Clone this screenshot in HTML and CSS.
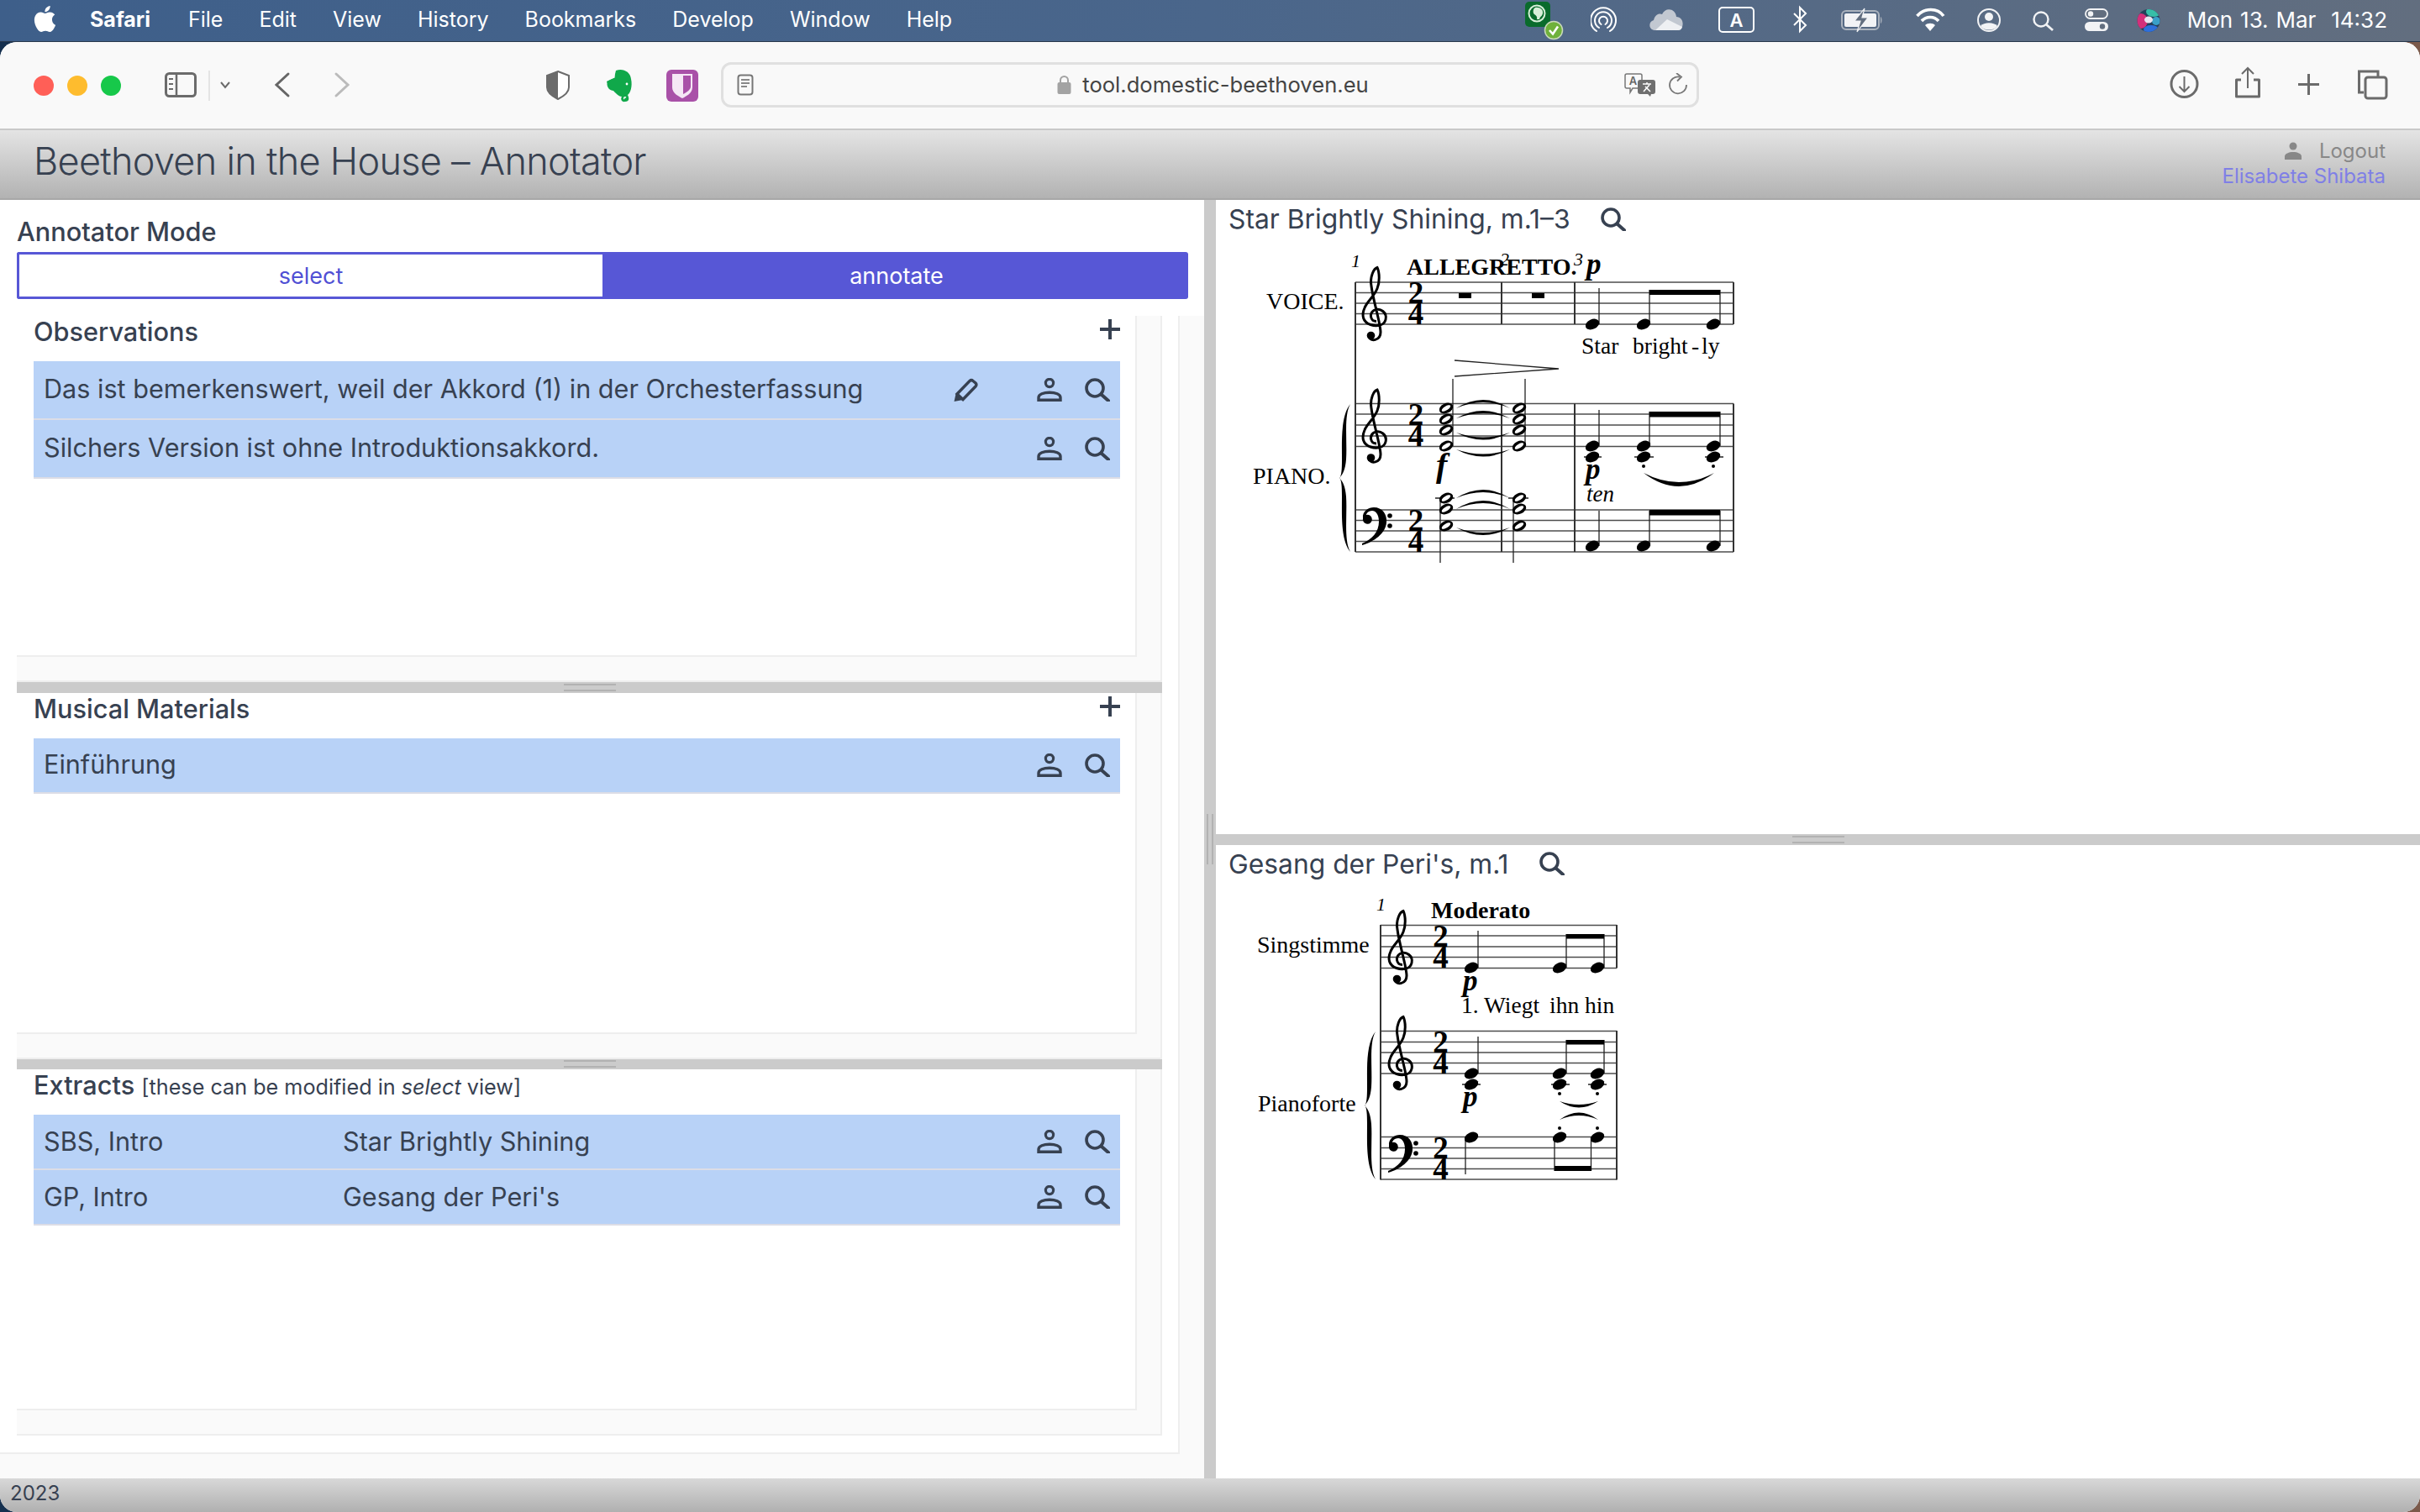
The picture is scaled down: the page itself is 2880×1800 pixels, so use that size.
FILE: index.html
```html
<!DOCTYPE html>
<html lang="en">
<head>
<meta charset="utf-8">
<title>Beethoven in the House – Annotator</title>
<link rel="stylesheet" href="styles.css">
</head>
<body>
<svg class="defs" aria-hidden="true">
  <defs>
    <symbol id="i-person" viewBox="0 0 30 28"><circle cx="15" cy="6" r="4.6" fill="none" stroke="currentColor" stroke-width="3.2"/><path d="M2 26.2v-3c0-4 6-6 13-6s13 2 13 6v3z" fill="none" stroke="currentColor" stroke-width="3.4"/></symbol>
    <symbol id="i-search" viewBox="0 0 31 28"><circle cx="13" cy="12" r="10" fill="none" stroke="currentColor" stroke-width="3.6"/><path d="M20.5 19.5L29 27" stroke="currentColor" stroke-width="4" stroke-linecap="round"/></symbol>
    <symbol id="i-pencil" viewBox="0 0 31 29"><path d="M5 19L20 3.5a3 3 0 0 1 4 0l3 2.5a3 3 0 0 1 0 4L12 25.500z" fill="none" stroke="currentColor" stroke-width="3.400"/><path d="M1.500 28l2-9 8.500 7z" fill="currentColor"/></symbol>
    <symbol id="i-plus" viewBox="0 0 24 24"><path d="M12 0v24M0 12h24" stroke="currentColor" stroke-width="4"/></symbol>

    <g id="treble"><path d="M2 9C-5 9-7 0-1-4C7-8 15-1 13 7C11 15 1 15-5 13C-14 10-16 2-12-7C-9-15-1-20 3-30C6-37 6-49 3-55C-1-54-6-44-4-33C-2-16 7 11 7 22C7 32-5 34-7 27" fill="none" stroke="#000" stroke-width="3"/><circle cx="-4.500" cy="26" r="4.800"/></g>
    <g id="bass"><path d="M-15 10C-16 1-8-3-2-3C8-3 14 5 13 15C12 28-2 38-16 42L-16 40C-4 35 4 26 4 14C4 5 0 1-4 1C-8 1-11 4-11 6A5.500 5.500 0 1 1-15 10Z"/><circle cx="17" cy="7" r="2.800"/><circle cx="17" cy="19" r="2.800"/></g>
    <g id="head"><ellipse rx="8.600" ry="5.800" transform="rotate(-25)"/></g>
    <g id="open"><ellipse rx="8.600" ry="5.900" transform="rotate(-25)"/><ellipse rx="6" ry="2.400" transform="rotate(-32)" fill="#fff"/></g>
    <path id="brace" d="M13 0C5 14 9.500 44 8 66C7 78 4 84 0 88C4 92 7 98 8 110C9.500 132 5 162 13 176C1.500 162 3 132 3 110C3 98 2.500 92 .5 88C2.500 84 3 78 3 66C3 44 1.500 14 13 0Z"/>
  </defs>
</svg>

<header class="menubar">
  <svg class="apple" viewBox="0 0 24 24"><path fill="#fff" d="M12.152 6.896c-.948 0-2.415-1.078-3.960-1.040-2.040.027-3.910 1.183-4.961 3.014-2.117 3.675-.546 9.103 1.519 12.090 1.013 1.454 2.208 3.090 3.792 3.039 1.520-.065 2.090-.987 3.935-.987 1.831 0 2.350.987 3.960.948 1.637-.026 2.676-1.480 3.676-2.948 1.156-1.688 1.636-3.325 1.662-3.415-.039-.013-3.182-1.221-3.220-4.857-.026-3.040 2.480-4.494 2.597-4.559-1.429-2.090-3.623-2.324-4.390-2.376-2-.156-3.675 1.090-4.610 1.090zM15.530 3.830c.843-1.012 1.400-2.427 1.245-3.830-1.207.052-2.662.805-3.532 1.818-.780.896-1.454 2.338-1.273 3.714 1.338.104 2.715-.688 3.559-1.701"/></svg>
  <nav class="menus">
    <span class="menu-app">Safari</span><span>File</span><span>Edit</span><span>View</span><span>History</span><span>Bookmarks</span><span>Develop</span><span>Window</span><span>Help</span>
  </nav>
  <div class="status">
    <svg width="78" height="50" viewBox="0 0 78 50"><rect x="0" y="2" width="30" height="30" rx="5" fill="#0a6b2c"/><circle cx="14" cy="16" r="9.500" fill="none" stroke="#d8efd8" stroke-width="2"/><path d="M12 9C17 8 22 11 21 16C20 20 18 19 17 23L14 23C15 19 12 18 10 16C9 13 10 10 12 9Z" fill="#d8efd8"/><circle cx="34" cy="36" r="10.500" fill="#6fb13b" stroke="#c9d9bb" stroke-width="1.500"/><path d="M29 36l4 4.500 6-9" fill="none" stroke="#fff" stroke-width="2.600"/></svg>
    <svg width="69" height="50" viewBox="0 0 69 50"><g fill="none" stroke="#fff" stroke-width="2" stroke-linecap="round"><path d="M7 37A15 15 0 1 1 23 37"/><path d="M10 33A10 10 0 1 1 20 33"/><path d="M12.500 29A5 5 0 1 1 17.500 29"/></g></svg>
    <svg width="83" height="50" viewBox="0 0 83 50"><path d="M8 36C0 36-1 26 6 24C8 16 14 16 16 17C20 8 32 10 33 20C39 20 42 26 40 32C39 35 37 36 35 36Z" fill="#c2c8d1"/><path d="M8 36L22 23L40 32C39 35 37 36 35 36Z" fill="#eef0f3"/></svg>
    <svg width="88" height="50" viewBox="0 0 88 50"><rect x="1" y="9" width="41" height="29" rx="4" fill="none" stroke="#fff" stroke-width="2"/><text x="21.500" y="32" class="status-a" text-anchor="middle">A</text></svg>
    <svg width="58" height="50" viewBox="0 0 58 50"><path d="M2 16L16 30L9 37V9L16 16L2 30" fill="none" stroke="#fff" stroke-width="2"/></svg>
    <svg width="89" height="50" viewBox="0 0 89 50"><rect x="1" y="13" width="44" height="22" rx="5" fill="none" stroke="#aab2bd" stroke-width="2"/><rect x="4" y="16" width="38" height="16" rx="2" fill="#f2f3f5"/><path d="M47 20v8c2-1 2-7 0-8z" fill="#aab2bd"/><path d="M28 10L16 25h7l-4 13L32 21h-7z" fill="#626e7f" stroke="#f2f3f5" stroke-width="1.200"/></svg>
    <svg width="73" height="50" viewBox="0 0 73 50"><g fill="none" stroke="#fff" stroke-width="3.600"><path d="M1.500 19C10 9 26 9 33 19"/><path d="M7 25C12 19 22 19 27 25"/></g><path d="M17 37l-6-7C14 27 20 27 23 30z" fill="#fff"/></svg>
    <svg width="66" height="50" viewBox="0 0 66 50"><circle cx="14" cy="24" r="13" fill="none" stroke="#f2f3f5" stroke-width="2"/><circle cx="14" cy="20" r="5" fill="#f2f3f5"/><path d="M4 31C8 26 20 26 24 31C20 37 8 37 4 31Z" fill="#f2f3f5"/></svg>
    <svg width="62" height="50" viewBox="0 0 62 50"><circle cx="10" cy="23" r="8.500" fill="none" stroke="#f2f3f5" stroke-width="2.400"/><path d="M16 29l8 7" stroke="#f2f3f5" stroke-width="2.800"/></svg>
    <svg width="62" height="50" viewBox="0 0 62 50"><rect x="1" y="11" width="26" height="11" rx="5.500" fill="#626e7f" stroke="#f2f3f5" stroke-width="1.800"/><circle cx="7" cy="16.500" r="3.200" fill="#f2f3f5"/><rect x="0" y="26" width="28" height="11" rx="5.500" fill="#f2f3f5"/><circle cx="21" cy="31.500" r="3.200" fill="#626e7f"/></svg>
    <svg width="60" height="50" viewBox="0 0 60 50"><defs><clipPath id="siriclip"><circle cx="14" cy="24.500" r="13.500"/></clipPath></defs><g clip-path="url(#siriclip)"><rect y="10" width="28" height="30" fill="#24405a"/><ellipse cx="5" cy="25" rx="8" ry="9" fill="#d42f7a"/><ellipse cx="20" cy="14" rx="9" ry="6" fill="#37bfa8"/><ellipse cx="17" cy="35" rx="9" ry="5" fill="#2d6fdc"/><ellipse cx="23" cy="25" rx="5" ry="5" fill="#3aa0c8"/><ellipse cx="14" cy="23.500" rx="5" ry="4" fill="#e9e2ee"/></g></svg>
    <span class="clock">Mon 13. Mar&nbsp; 14:32</span>
  </div>
</header>

<div class="window">
  <div class="toolbar">
    <svg class="tb-left" width="858" height="104" viewBox="0 0 858 104">
      <circle cx="52" cy="52" r="12" fill="#ff5f57"/><circle cx="92" cy="52" r="12" fill="#febc2e"/><circle cx="132" cy="52" r="12" fill="#17c84a"/>
      <rect x="197.500" y="37.500" width="35" height="27" rx="4" fill="none" stroke="#6b6b6b" stroke-width="3"/><path d="M210 37v28" stroke="#6b6b6b" stroke-width="2.500"/><path d="M201 44h5M201 50h5M201 56h5" stroke="#6b6b6b" stroke-width="2"/>
      <path d="M249 34v36" stroke="#ddd" stroke-width="1.500"/><path d="M263 48l5 6 5-6" fill="none" stroke="#6b6b6b" stroke-width="2"/>
      <path d="M343 38L329 51L343 64" fill="none" stroke="#666" stroke-width="3" stroke-linecap="round"/>
      <path d="M400 38L414 51L400 64" fill="none" stroke="#bbb" stroke-width="3" stroke-linecap="round"/>
      <path d="M664 35L677 40V54C677 60 670 65 664 68C658 65 651 60 651 54V40Z" fill="#fff" stroke="#6b6b6b" stroke-width="2"/><path d="M664 35L651 40V54C651 60 658 65 664 68Z" fill="#6b6b6b"/>
      <path d="M733 34C741 31 750 35 751 44C753 53 750 61 747 63C749 67 749 71 744 71C740 72 738 68 740 65C736 65 732 60 730 58C726 58 722 54 722.500 49L722 47L731 42Z" fill="#10a84a"/><circle cx="746" cy="50" r="1.400" fill="#fff"/><path d="M731 35V42L724 45" fill="none" stroke="#f9f9f9" stroke-width="1.200"/><path d="M745 66C743 65 742 67 743 68" fill="none" stroke="#fff" stroke-width="1.400"/>
      <rect x="793" y="33" width="38" height="38" rx="6" fill="#a951a8"/><path d="M800 38H824V54C824 61 816 65 812 67C808 65 800 61 800 54Z" fill="#f5e7f5"/><path d="M813 40H822V53C822 57 817 60 813 62Z" fill="#a951a8"/>
    </svg>
    <div class="urlbar">
      <svg class="reader" width="20" height="26" viewBox="0 0 20 26"><rect x="1.500" y="1.500" width="17" height="23" rx="3" fill="none" stroke="#777" stroke-width="2"/><path d="M5 7h10M5 11h10M5 15h7" stroke="#888" stroke-width="1.800"/></svg>
      <div class="url">
        <svg width="17" height="23" viewBox="0 0 17 23"><path d="M4 10V6.500a4.500 4.500 0 0 1 9 0V10" fill="none" stroke="#a3a3a3" stroke-width="2"/><rect x="0.500" y="9" width="16" height="14" rx="2" fill="#a3a3a3"/></svg>
        <span>tool.domestic-beethoven.eu</span>
      </div>
      <svg class="translate" width="38" height="28" viewBox="0 0 38 28"><path d="M3 1h16a2 2 0 0 1 2 2v13a2 2 0 0 1-2 2H10l-3 5v-5H3a2 2 0 0 1-2-2V3a2 2 0 0 1 2-2z" fill="#f9f9f9" stroke="#777" stroke-width="1.500"/><text x="10.500" y="14" class="tr-a" text-anchor="middle">A</text><path d="M19 8h15a3 3 0 0 1 3 3v11a3 3 0 0 1-3 3h-2l-1 3-3-3H19a3 3 0 0 1-3-3V11a3 3 0 0 1 3-3z" fill="#6f6f6f"/><path d="M22 13h10M27 11v2M23 22l7-8M31 22l-6-6" stroke="#fff" stroke-width="1.500"/></svg>
      <svg class="reload" width="24" height="27" viewBox="0 0 24 27"><path d="M14 4.500A10 10 0 1 0 22 14" fill="none" stroke="#777" stroke-width="1.800"/><path d="M10 0l6 4.500-5 5" fill="none" stroke="#777" stroke-width="1.800"/></svg>
    </div>
    <svg class="tb-right" width="858" height="104" viewBox="2022 0 858 104">
      <g fill="none" stroke="#6b6b6b" stroke-width="3">
        <circle cx="2599.500" cy="50" r="15.500"/><path d="M2599.500 41V59M2593.500 53L2599.500 59L2605.500 53" stroke-width="2"/>
        <path d="M2667 45H2661.500V65H2688.500V45H2682" stroke-linejoin="round"/><path d="M2675 55V32M2668 38L2675 31L2682 38" stroke-width="2"/>
        <path d="M2747.500 38V63M2735 50.500H2760"/>
        <path d="M2813 60H2807.500V35H2830V41"/><rect x="2815" y="42" width="25" height="25" rx="3"/>
      </g>
    </svg>
  </div>

  <div class="app-header">
    <h1>Beethoven in the House – Annotator</h1>
    <div class="account">
      <div class="logout"><svg width="22" height="22" viewBox="0 0 22 22"><circle cx="11" cy="5" r="4.500" fill="#888"/><path d="M1 21v-4c0-3 5-5 10-5s10 2 10 5v4z" fill="#888"/></svg><span>Logout</span></div>
      <div class="user-name">Elisabete Shibata</div>
    </div>
  </div>

  <main class="workspace">
    <section class="left">
      <div class="mode">
        <div class="mode-title">Annotator Mode</div>
        <div class="mode-buttons"><button class="mode-btn">select</button><button class="mode-btn is-on">annotate</button></div>
      </div>
      <div class="left-scroll">
        <div class="left-inner">
          <div class="pane"><div class="pane-inner">
            <div class="pane-head"><h2>Observations</h2><svg class="plus"><use href="#i-plus"/></svg></div>
            <div class="row row-tall"><span class="cell-text">Das ist bemerkenswert, weil der Akkord (1) in der Orchesterfassung</span><svg class="ic ic-pencil"><use href="#i-pencil"/></svg><svg class="ic ic-person"><use href="#i-person"/></svg><svg class="ic ic-search"><use href="#i-search"/></svg></div>
            <div class="row row-tall"><span class="cell-text">Silchers Version ist ohne Introduktionsakkord.</span><svg class="ic ic-person"><use href="#i-person"/></svg><svg class="ic ic-search"><use href="#i-search"/></svg></div>
          </div></div>
          <div class="gutter-h"><i class="grip-h"></i></div>
          <div class="pane"><div class="pane-inner">
            <div class="pane-head"><h2>Musical Materials</h2><svg class="plus"><use href="#i-plus"/></svg></div>
            <div class="row"><span class="cell-text">Einführung</span><svg class="ic ic-person"><use href="#i-person"/></svg><svg class="ic ic-search"><use href="#i-search"/></svg></div>
          </div></div>
          <div class="gutter-h"><i class="grip-h"></i></div>
          <div class="pane"><div class="pane-inner">
            <div class="pane-head"><h2>Extracts <small>[these can be modified in <em>select</em> view]</small></h2></div>
            <div class="row"><span class="cell-short">SBS, Intro</span><span class="cell-text">Star Brightly Shining</span><svg class="ic ic-person"><use href="#i-person"/></svg><svg class="ic ic-search"><use href="#i-search"/></svg></div>
            <div class="row"><span class="cell-short">GP, Intro</span><span class="cell-text">Gesang der Peri's</span><svg class="ic ic-person"><use href="#i-person"/></svg><svg class="ic ic-search"><use href="#i-search"/></svg></div>
          </div></div>
        </div>
      </div>
    </section>

    <div class="gutter-v"><i class="grip-v"></i></div>

    <section class="right">
      <div class="score-pane">
        <div class="score-title"><span>Star Brightly Shining, m.1–3</span><svg class="ic ic-search"><use href="#i-search"/></svg></div>
        <svg class="score score-a" width="600" height="380" viewBox="1480 300 600 380">
          <g class="lines">
            <path d="M1613 335H2063M1613 347.500H2063M1613 360H2063M1613 372.500H2063M1613 385H2063"/>
            <path d="M1613 479.500H2063M1613 492H2063M1613 505H2063M1613 518H2063M1613 530.500H2063"/>
            <path d="M1613 606H2063M1613 618.500H2063M1613 631H2063M1613 643.500H2063M1613 656H2063"/>
          </g>
          <g class="bars">
            <path d="M1613 335V656M2063 335V385M2063 479.500V656M1787 335V385M1874 335V385M1787 479.500V656M1874 479.500V656"/>
          </g>
          <use href="#brace" x="1594" y="480"/>
          <text class="t-serif" x="1507" y="367">VOICE.</text>
          <text class="t-serif" x="1491" y="575">PIANO.</text>
          <text class="t-num" x="1608" y="317">1</text>
          <text class="t-bold" x="1674" y="326">ALLEGRETTO.</text>
          <text class="t-num" x="1785" y="315">2</text>
          <text class="t-num" x="1873" y="315">3</text>
          <text class="t-dyn" x="1888" y="325">p</text>
          <use href="#treble" x="1636" y="372.500"/><use href="#treble" x="1636" y="518"/><use href="#bass" x="1637" y="606"/>
          <text class="t-sig" x="1685" y="360">2</text><text class="t-sig" x="1685" y="385">4</text>
          <text class="t-sig" x="1685" y="505">2</text><text class="t-sig" x="1685" y="530">4</text>
          <text class="t-sig" x="1685" y="631">2</text><text class="t-sig" x="1685" y="656">4</text>
          <path d="M1736 348h15v6h-15zM1823 348h15v6h-15z"/>
          <g class="stems"><path d="M1903 342V385M1963 344V385M2047 344V385M1729 450V530M1815 450V530M1903 487V530M1963 489V530M2047 489V530M1714 592V669M1801 592V669M1903 607V649M1963 607V649M2047 607V649"/></g>
          <path d="M1963 344h84v6h-84zM1963 489h84v6.500h-84zM1963 606h84v6.500h-84z"/>
          <use href="#head" x="1895" y="385"/><use href="#head" x="1956" y="385"/><use href="#head" x="2039" y="385"/>
          <text class="t-lyr" x="1882" y="420">Star</text><text class="t-lyr" x="1943" y="420">bright</text><text class="t-lyr" x="2013" y="420">-</text><text class="t-lyr" x="2025" y="420">ly</text>
          <path class="hair" d="M1731 428L1855 438L1731 447"/>
          <use href="#open" x="1721" y="485"/><use href="#open" x="1721" y="498"/><use href="#open" x="1721" y="511"/><use href="#open" x="1721" y="530"/>
          <use href="#open" x="1808" y="485"/><use href="#open" x="1808" y="498"/><use href="#open" x="1808" y="511"/><use href="#open" x="1808" y="530"/>
          <path d="M1733 485Q1765 465 1797 485Q1765 471 1733 485ZM1733 497Q1765 479 1797 497Q1765 485 1733 497ZM1733 514Q1765 531 1797 514Q1765 525 1733 514ZM1733 534Q1765 551 1797 534Q1765 545 1733 534Z"/>
          <text class="t-f" x="1709" y="566">f</text>
          <path class="ledger" d="M1885 543H1906M1945 543H1968M2029 543H2051M1708 592H1731M1795 592H1819"/>
          <use href="#head" x="1895" y="530"/><use href="#head" x="1895" y="543"/><use href="#head" x="1956" y="530"/><use href="#head" x="1956" y="543"/><use href="#head" x="2039" y="530"/><use href="#head" x="2039" y="543"/>
          <circle cx="1956" cy="554" r="2"/><circle cx="2039" cy="554" r="2"/>
          <text class="t-dyn" x="1887" y="569">p</text>
          <text class="t-it" x="1888" y="596">ten</text>
          <path d="M1956 562Q1998 594 2040 562Q1998 584 1956 562Z"/>
          <use href="#open" x="1721" y="592"/><use href="#open" x="1721" y="605"/><use href="#open" x="1721" y="625"/>
          <use href="#open" x="1808" y="592"/><use href="#open" x="1808" y="605"/><use href="#open" x="1808" y="625"/>
          <path d="M1733 592Q1765 572 1797 592Q1765 578 1733 592ZM1733 605Q1765 585 1797 605Q1765 591 1733 605ZM1733 627Q1765 645 1797 627Q1765 639 1733 627Z"/>
          <use href="#head" x="1895" y="649"/><use href="#head" x="1956" y="649"/><use href="#head" x="2039" y="649"/>
        </svg>
      </div>
      <div class="gutter-h gutter-right"><i class="grip-h"></i></div>
      <div class="score-pane">
        <div class="score-title"><span>Gesang der Peri's, m.1</span><svg class="ic ic-search"><use href="#i-search"/></svg></div>
        <svg class="score score-b" width="480" height="350" viewBox="1480 1060 480 350">
          <g class="lines">
            <path d="M1643 1100.500H1924M1643 1113H1924M1643 1126H1924M1643 1138.500H1924M1643 1151.500H1924"/>
            <path d="M1643 1226.500H1924M1643 1239.500H1924M1643 1252H1924M1643 1264.500H1924M1643 1277H1924"/>
            <path d="M1643 1352.500H1924M1643 1365.500H1924M1643 1378H1924M1643 1390.500H1924M1643 1403H1924"/>
          </g>
          <g class="bars"><path d="M1643 1100V1403.500M1924 1100V1151.500M1924 1226V1403.500"/></g>
          <use href="#brace" transform="translate(1624 1227)"/>
          <text class="t-num" x="1638" y="1083">1</text>
          <text class="t-bold" x="1703" y="1092">Moderato</text>
          <text class="t-serif" x="1496" y="1133">Singstimme</text>
          <text class="t-serif" x="1497" y="1322">Pianoforte</text>
          <use href="#treble" x="1667" y="1138.500"/><use href="#treble" x="1667" y="1264.500"/><use href="#bass" x="1668" y="1353"/>
          <text class="t-sig" x="1714.500" y="1126">2</text><text class="t-sig" x="1714.500" y="1151">4</text>
          <text class="t-sig" x="1714.500" y="1252">2</text><text class="t-sig" x="1714.500" y="1277">4</text>
          <text class="t-sig" x="1714.500" y="1378">2</text><text class="t-sig" x="1714.500" y="1403">4</text>
          <g class="stems"><path d="M1759 1107V1151M1864 1111V1151M1909 1111V1151M1759 1233V1277M1864 1237V1277M1909 1237V1277M1744 1353V1397M1850 1353V1393M1893.500 1353V1393"/></g>
          <path d="M1864 1111h45v5.500h-45zM1864 1237h45v5.500h-45zM1850 1387h44v6h-44z"/>
          <use href="#head" x="1751" y="1151"/><use href="#head" x="1856" y="1151"/><use href="#head" x="1901" y="1151"/>
          <text class="t-dyn" x="1741" y="1178">p</text>
          <text class="t-lyr" x="1739" y="1205">1. Wiegt</text><text class="t-lyr" x="1844" y="1205">ihn</text><text class="t-lyr" x="1886" y="1205">hin</text>
          <path class="ledger" d="M1740 1290H1762M1846 1290H1868M1890 1290H1912"/>
          <use href="#head" x="1751" y="1277"/><use href="#head" x="1751" y="1290"/><use href="#head" x="1856" y="1277"/><use href="#head" x="1856" y="1290"/><use href="#head" x="1901" y="1277"/><use href="#head" x="1901" y="1290"/>
          <circle cx="1856" cy="1301" r="2"/><circle cx="1901" cy="1301" r="2"/>
          <text class="t-dyn" x="1741" y="1316">p</text>
          <path d="M1856 1310Q1879 1325 1902 1310Q1879 1318 1856 1310ZM1856 1332Q1879 1315 1902 1332Q1879 1322 1856 1332Z"/>
          <circle cx="1856" cy="1342" r="2"/><circle cx="1901" cy="1342" r="2"/>
          <use href="#head" x="1751" y="1353"/><use href="#head" x="1856" y="1353"/><use href="#head" x="1901" y="1353"/>
        </svg>
      </div>
    </section>
  </main>

  <footer class="app-footer">2023</footer>
</div>
</body>
</html>
```

FILE: styles.css
```css
* { box-sizing: border-box; }
html, body { margin: 0; height: 100%; }
body {
  width: 2880px; height: 1800px; overflow: hidden;
  display: flex; flex-direction: column;
  font-family: Inter, "Noto Sans", sans-serif;
  color: #374151;
  background: linear-gradient(90deg, #15304f, #7b5a4b);
}
.defs { position: absolute; width: 0; height: 0; }

/* menu bar */
.menubar {
  height: 50px; flex: none; display: flex; align-items: center;
  background: linear-gradient(90deg, #3e5f8a 0%, #4a668b 50%, #626e7f 100%);
  border-bottom: 1px solid #28384c;
  color: #fff; font-size: 25px;
}
.apple { width: 31px; height: 31px; margin: -4px 0 0 38px; flex: none; }
.menus { display: flex; gap: 43px; margin: -3px 0 0 38px; }
.menu-app { font-weight: 700; margin-right: 2px; }
.status { margin-left: auto; display: flex; align-items: center; padding-right: 39px; }
.status svg { flex: none; display: block; }
.status-a { font: 600 22px Inter, sans-serif; fill: #fff; }
.clock { font-size: 26px; word-spacing: 1.600px; white-space: nowrap; margin-top: -3px; }

/* window */
.window {
  flex: 1; min-height: 0; display: flex; flex-direction: column;
  border-radius: 20px; overflow: hidden; background: #fff;
}
.toolbar {
  height: 105px; flex: none; display: flex; align-items: center;
  background: #f9f9f9; border-bottom: 2px solid #c9c9c9;
}
.tb-left, .tb-right { flex: none; display: block; }
.urlbar {
  width: 1164px; height: 54px; flex: none; display: flex; align-items: center;
  border: 3px solid #e0e0e0; border-radius: 12px; padding: 0 10px 0 16px; margin-top: -2px;
}
.url { flex: 1; display: flex; align-items: center; justify-content: center; gap: 13px; font-size: 25.600px; color: #444; padding-left: 57px; }
.reader { flex: none; }
.translate { flex: none; margin-right: 14px; }
.reload { flex: none; }
.tr-a { font: 600 13px Inter, sans-serif; fill: #666; }

.app-header {
  height: 83px; flex: none; display: flex; justify-content: space-between; align-items: flex-start;
  background: linear-gradient(180deg, #e4e4e4, #b2b2b2);
  border-bottom: 2px solid #a8a8a8;
  padding: 0 41px;
}
.app-header h1 { margin: 9px 0 0 -1px; font-size: 45px; font-weight: 300; line-height: 56px; letter-spacing: -0.7px; white-space: nowrap; }
.account { text-align: right; font-size: 24px; line-height: 30px; padding-top: 10px; }
.logout { display: flex; justify-content: flex-end; align-items: center; gap: 20px; color: #888; }
.user-name { color: #7f7fe6; }

.workspace { flex: 1; min-height: 0; display: flex; }

/* left column */
.left { width: 1433px; flex: none; display: flex; flex-direction: column; background: #fff; }
.mode { height: 138px; flex: none; padding: 14px 19px 0 20px; }
.mode-title { font-size: 30.700px; font-weight: 500; line-height: 48px; }
.mode-buttons { display: flex; height: 56px; }
.mode-btn {
  flex: 1; font: 400 27px Inter, sans-serif; color: #5050d4; background: #fff;
  border: 3px solid #5757d6; padding: 0; border-right-width: 0; border-radius: 3px 0 0 3px;
}
.mode-btn.is-on { background: #5757d6; color: #fff; border-radius: 0 3px 3px 0; }

.left-scroll { flex: 1; min-height: 0; display: flex; background: #fafafa; padding: 0 29px 29px 0; }
.left-inner {
  flex: 1; display: flex; flex-direction: column; background: #fff;
  border-right: 2px solid #eee; border-bottom: 2px solid #eee;
  padding: 0 19px 20px 20px;
  min-width: 0;
}
.pane {
  flex: 1; min-height: 0; display: flex; background: #fafafa;
  padding: 0 28px 28px 0; border-right: 2px solid #eee; border-bottom: 2px solid #eee;
}
.pane-inner {
  flex: 1; background: #fff; border-right: 2px solid #eee; border-bottom: 2px solid #eee;
  padding: 0 18px 0 20px;
}
.pane-head { height: 54px; display: flex; justify-content: space-between; align-items: flex-start; }
.pane-head h2 { margin: 0; font-size: 30.700px; font-weight: 500; line-height: 38px; }
.pane-head small { font-size: 25.200px; font-weight: 400; }
.plus { width: 24px; height: 24px; margin-top: 4px; flex: none; }

.row {
  height: 66px; display: flex; align-items: center; padding: 0 12px;
  background: #b8d2f7; border-bottom: 2px solid #dcdde6; font-size: 30.600px;
}
.row-tall { height: 70px; }
.cell-short { width: 356px; flex: none; margin-top: -2px; }
.cell-text { flex: 1; white-space: nowrap; margin-top: -2px; }
.row-tall .cell-text { margin-top: -4px; }
.ic { display: block; flex: none; }
.ic-person { width: 30px; height: 28px; margin-left: 26px; }
.ic-search { width: 31px; height: 28px; margin-left: 26px; }
.ic-pencil { width: 31px; height: 29px; margin-right: 43px; }

.gutter-h { height: 12.5px; flex: none; background: #cbcbcb; display: flex; align-items: center; justify-content: center; }
.grip-h { display: block; width: 62px; height: 9px; border-top: 2px solid #b2b2b2; border-bottom: 2px solid #b2b2b2; }
.gutter-v { width: 14px; flex: none; background: #cbcbcb; display: flex; align-items: center; justify-content: center; }
.grip-v { display: block; width: 8px; height: 60px; border-left: 2px solid #b2b2b2; border-right: 2px solid #b2b2b2; }

/* right column */
.right { flex: 1; min-width: 0; display: flex; flex-direction: column; background: #fff; }
.score-pane { flex: 1; min-height: 0; padding-left: 15px; }
.gutter-right { height: 13px; }
.score-title { height: 48px; display: flex; align-items: center; font-size: 31.800px; padding-bottom: 3px; }
.score-title .ic-search { margin-left: 35px; }
.score { display: block; margin-left: 18px; overflow: visible; }
.score-a { margin-top: 15px; }
.score-b { margin-top: 7px; }
.lines path { fill: none; stroke: #4d4d4d; stroke-width: 1.500; }
.bars path { fill: none; stroke: #333; stroke-width: 2; }
.stems path { fill: none; stroke: #222; stroke-width: 1.300; }
.ledger { fill: none; stroke: #222; stroke-width: 1.500; }
.hair { fill: none; stroke: #222; stroke-width: 1.300; }
.score text { font-family: "Liberation Serif", serif; fill: #000; }
.score .t-serif { font-size: 28px; }
.score .t-bold { font-size: 28px; font-weight: 700; }
.score .t-num { font-size: 22px; font-style: italic; }
.score .t-sig { font-size: 37px; font-weight: 700; text-anchor: middle; }
.score .t-dyn { font-size: 35px; font-weight: 700; font-style: italic; }
.score .t-f { font-size: 40px; font-weight: 700; font-style: italic; }
.score .t-it { font-size: 27px; font-style: italic; }
.score .t-lyr { font-size: 27.500px; }

.app-footer {
  height: 40px; flex: none; padding: 0 12px; font-size: 24px; line-height: 36px;
  background: linear-gradient(180deg, #d8d8d8, #b0b0b0);
}
```
